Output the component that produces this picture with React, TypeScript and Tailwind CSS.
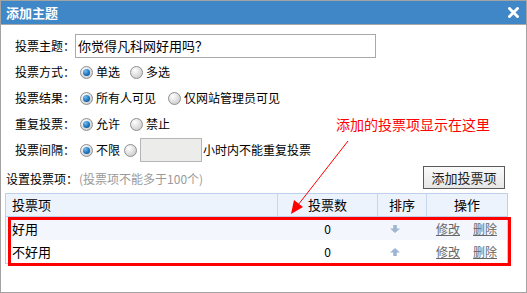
import React from "react";

function Radio({ checked }: { checked?: boolean }) {
  return (
    <span className="inline-flex h-[13px] w-[13px] shrink-0 items-center justify-center rounded-full border border-[#8f8f8f] bg-[radial-gradient(circle_at_35%_30%,#ffffff,#d4d4d4_70%,#bdbdbd)]">
      {checked && (
        <span className="h-[7px] w-[7px] rounded-full bg-[radial-gradient(circle_at_35%_30%,#6fc0f5,#1a6fb8_60%,#0b3f72)]" />
      )}
    </span>
  );
}

function Option({ checked, label, gap = "mr-[10px]" }: { checked?: boolean; label?: string; gap?: string }) {
  return (
    <span className={`flex items-center ${gap}`}>
      <Radio checked={checked} />
      {label && <span className="ml-[3px]">{label}</span>}
    </span>
  );
}

function Row({ label, children }: { label: string; children: React.ReactNode }) {
  return (
    <div className="flex h-[26px] items-center">
      <span className="w-[65px] shrink-0">{label}</span>
      {children}
    </div>
  );
}

function SortArrow({ up }: { up?: boolean }) {
  return (
    <svg width="10" height="8" viewBox="0 0 10 8" className={up ? "" : "rotate-180"}>
      <path d="M5 0 L10 4.5 H6.8 V8 H3.2 V4.5 H0 Z" fill="#9fb6d3" />
    </svg>
  );
}

const rows = [
  { name: "好用", up: false, bg: "bg-[#f3f6fc]" },
  { name: "不好用", up: true, bg: "bg-white" },
];

export default function App() {
  return (
    <div
      className="relative h-[293px] w-[527px] overflow-hidden border border-[#a3a3a3] bg-white text-[12px] text-black"
      style={{ fontFamily: '"Noto Sans CJK SC", "Noto Sans", sans-serif' }}
    >
      <div className="flex h-[24px] items-center justify-between border-b border-[#a8a8a8] bg-[#3f87c6] pl-[5px] pr-[7px]">
        <span className="text-[13px] font-bold text-white">添加主题</span>
        <svg width="11" height="11" viewBox="0 0 11 11">
          <path d="M1.5 1.5 L9.5 9.5 M9.5 1.5 L1.5 9.5" stroke="#fff" strokeWidth="2.8" strokeLinecap="square" />
        </svg>
      </div>

      <div className="pl-[14px] pt-[8px]">
        <div className="flex h-[26px] items-center">
          <span className="w-[60px] shrink-0">投票主题：</span>
          <div className="flex h-[24px] w-[301px] items-center border border-[#a9a9a9] pl-[2px] text-[13px]">
            你觉得凡科网好用吗？
          </div>
        </div>
        <Row label="投票方式：">
          <Option checked label="单选" gap="mr-[10px]" />
          <Option label="多选" />
        </Row>
        <Row label="投票结果：">
          <Option checked label="所有人可见" gap="mr-[12px]" />
          <Option label="仅网站管理员可见" />
        </Row>
        <Row label="重复投票：">
          <Option checked label="允许" gap="mr-[10px]" />
          <Option label="禁止" />
        </Row>
        <Row label="投票间隔：">
          <Option checked label="不限" gap="mr-[4px]" />
          <Option gap="mr-[3px]" />
          <div className="h-[24px] w-[62px] border border-[#b5b5b5] bg-[#ececea]" />
          <span className="ml-[1px]">小时内不能重复投票</span>
        </Row>
      </div>

      <div className="flex h-[26px] items-end justify-between pl-[5px] pr-[21px]">
        <div className="flex items-center pb-[1px]">
          <span>设置投票项：</span>
          <span className="ml-[1px] text-[#9a9a9a]">(投票项不能多于100个)</span>
        </div>
        <button className="flex h-[23px] w-[82px] items-center justify-center border border-[#5a5a5a] bg-[linear-gradient(#fafafa,#e6e6e6)] text-[13px] text-[#222]">
          添加投票项
        </button>
      </div>

      <div className="ml-[4px] mt-[4px] w-[503px] border border-[#bcd0ea]">
        <div className="flex h-[23px] items-center border-b border-[#bcd0ea] bg-[#edf3fc] text-[13px]">
          <span className="w-[271px] pl-[6px]">投票项</span>
          <span className="h-full w-[100px] border-l border-[#c5d6ee] text-center leading-[22px]">投票数</span>
          <span className="h-full w-[49px] border-l border-[#c5d6ee] text-center leading-[22px]">排序</span>
          <span className="h-full flex-1 border-l border-[#c5d6ee] text-center leading-[22px]">操作</span>
        </div>
        {rows.map((r) => (
          <div key={r.name} className={`flex h-[23px] items-center ${r.bg} text-[13px]`}>
            <span className="w-[271px] pl-[6px]">{r.name}</span>
            <span className="w-[100px] pl-[1px] text-center text-[12px]">0</span>
            <span className="flex w-[49px] justify-center pr-[14px]">
              <SortArrow up={r.up} />
            </span>
            <span className="flex flex-1 justify-center gap-[13px] text-[12px] text-[#666] underline">
              <span>修改</span>
              <span>删除</span>
            </span>
          </div>
        ))}
      </div>

      {/* annotation overlay */}
      <div className="pointer-events-none absolute left-[7px] top-[216px] h-[49px] w-[503px] border-[3px] border-[#ff0000]" />
      <span className="absolute left-[335px] top-[113px] text-[14px] text-[#ff0000]">添加的投票项显示在这里</span>
      <svg className="pointer-events-none absolute left-0 top-0" width="527" height="293">
        <line x1="347" y1="140" x2="297" y2="204" stroke="#ff0000" strokeWidth="1" />
        <path d="M290 213 L293 199 L302 206 Z" fill="#ff0000" />
      </svg>
    </div>
  );
}
